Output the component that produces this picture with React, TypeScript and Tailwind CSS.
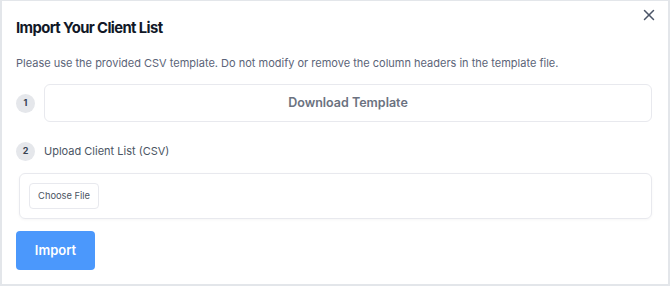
import { X } from 'lucide-react'

export default function App() {
  return (
    <div className="relative h-[286px] w-[670px] border-l-2 border-t border-r-2 border-b-2 border-[#e3e6ea] bg-white font-['Inter',sans-serif]">
      <button className="absolute right-[10px] top-[5px] text-[#4b5568]">
        <X size={18} strokeWidth={2} />
      </button>
      <div className="flex flex-col pl-[14px] pr-[14px] pt-[16px]">
        <h2 className="text-[14.8px] font-bold leading-[22px] tracking-[-0.6px] text-[#111827]">
          Import Your Client List
        </h2>
        <p className="mt-[16px] text-[11px] leading-[16px] text-[#5b6478]">
          Please use the provided CSV template. Do not modify or remove the column headers in the template file.
        </p>
        <div className="mt-[13px] flex items-center gap-[9px] pr-[2px]">
          <span className="flex h-[19px] w-[19px] shrink-0 items-center justify-center rounded-full bg-[#e5e7eb] text-[9px] font-bold text-[#374151]">
            1
          </span>
          <button className="flex h-[38px] flex-1 items-center justify-center rounded-md border border-[#e8e9ee] bg-white text-[12.5px] font-semibold text-[#6b7280]">
            Download Template
          </button>
        </div>
        <div className="mt-[20px] flex h-[18px] items-center gap-[9px]">
          <span className="flex h-[19px] w-[19px] shrink-0 items-center justify-center rounded-full bg-[#e5e7eb] text-[9px] font-bold text-[#374151]">
            2
          </span>
          <span className="text-[11px] text-[#4b5563]">Upload Client List (CSV)</span>
        </div>
        <div className="ml-[3px] mr-[2px] mt-[13px] flex h-[46px] items-center rounded-md border border-[#e8e9ee] px-[9px] shadow-[0_1px_3px_rgba(0,0,0,0.04)]">
          <button className="h-[26px] w-[70px] rounded-[4px] border border-[#e8e9ee] bg-white text-[9.3px] text-[#4b5563]">
            Choose File
          </button>
        </div>
        <div className="mt-[12px]">
          <button className="h-[39px] w-[79px] rounded-[4px] bg-[#4b98fc] text-[13px] font-semibold text-white">
            Import
          </button>
        </div>
      </div>
    </div>
  )
}
